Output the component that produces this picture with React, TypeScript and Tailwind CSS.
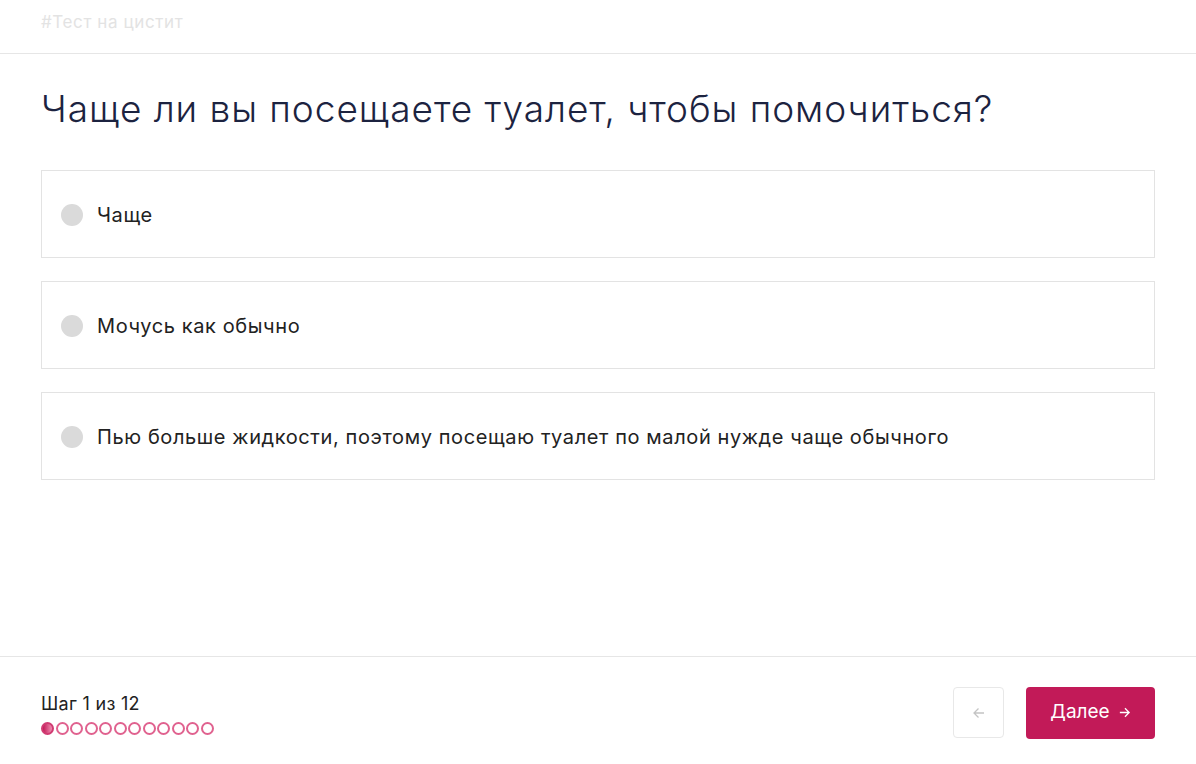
import React, { useState } from 'react';

const options = [
  'Чаще',
  'Мочусь как обычно',
  'Пью больше жидкости, поэтому посещаю туалет по малой нужде чаще обычного',
];

const App: React.FC = () => {
  const [selected, setSelected] = useState<number | null>(null);
  const total = 12;
  const step = 1;

  return (
    <div className="flex h-[764px] w-full flex-col bg-white font-['Inter',sans-serif] text-[#1c2340]">
      {/* Header */}
      <div className="flex h-[54px] shrink-0 items-start border-b border-[#e6e6e6] px-[41px] pt-[11px]">
        <span className="text-[17px] leading-[22px] tracking-[0.6px] text-[#e3e3e3]">#Тест на цистит</span>
      </div>

      {/* Question */}
      <div className="flex flex-1 flex-col px-[41px] pt-[33px]">
        <h1 className="text-[37px] font-light leading-[44px] tracking-[0.95px]">
          Чаще ли вы посещаете туалет, чтобы помочиться?
        </h1>
        <div className="mt-[39px] flex flex-col gap-[23px]">
          {options.map((o, i) => (
            <button
              key={o}
              onClick={() => setSelected(i)}
              className="flex h-[88px] items-center gap-[14px] border border-[#e3e3e3] bg-white pl-[19px] pt-[1px] text-left"
            >
              <span
                className={`h-[22px] w-[22px] shrink-0 rounded-full ${
                  selected === i ? 'bg-[#c21a58]' : 'bg-[#dadada]'
                }`}
              />
              <span className="text-[20px] tracking-[0.6px] text-[#222]">{o}</span>
            </button>
          ))}
        </div>
      </div>

      {/* Footer */}
      <div className="flex h-[108px] shrink-0 items-center justify-between border-t border-[#e6e6e6] px-[41px]">
        <div className="flex flex-col gap-[8px] pt-[8px]">
          <span className="text-[18px] leading-[20px] tracking-[0.3px] text-[#222]">
            Шаг {step} из {total}
          </span>
          <div className="flex gap-[1.5px]">
            {Array.from({ length: total }).map((_, i) => (
              <span
                key={i}
                className={`h-[13px] w-[13px] rounded-full border-2 ${
                  i < step ? 'border-[#d03b72] bg-[linear-gradient(90deg,#c21a58,#f08fb2)]' : 'border-[#e0628f]'
                }`}
              />
            ))}
          </div>
        </div>
        <div className="flex items-center gap-[22px] pt-[4px]">
          <button className="flex h-[51px] w-[51px] items-center justify-center rounded-[4px] border border-[#e8e8e8] bg-white text-[#c4c4c4]">
            <svg width="14" height="14" viewBox="0 0 14 14" fill="none" stroke="currentColor" strokeWidth="1.3">
              <path d="M12 7H2M6.5 2.5 2 7l4.5 4.5" />
            </svg>
          </button>
          <button className="flex h-[52px] w-[129px] items-center justify-center gap-[8px] rounded-[4px] bg-[#c21a58] text-[19px] text-white">
            Далее
            <svg width="13" height="13" viewBox="0 0 14 14" fill="none" stroke="currentColor" strokeWidth="1.4">
              <path d="M2 7h10M7.5 2.5 12 7l-4.5 4.5" />
            </svg>
          </button>
        </div>
      </div>
    </div>
  );
};

export default App;
